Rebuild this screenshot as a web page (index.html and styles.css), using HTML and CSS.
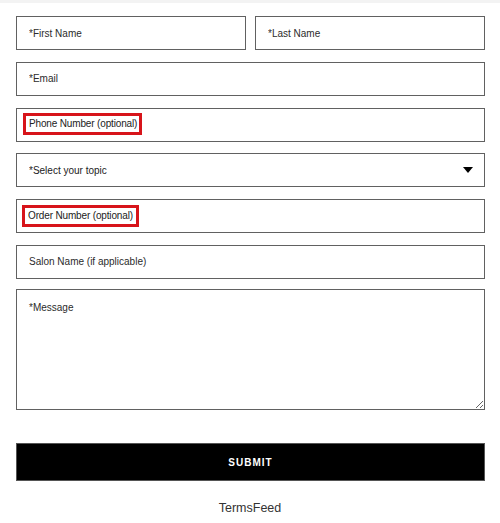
FILE: index.html
```html
<!DOCTYPE html>
<html lang="en">
<head>
    <meta charset="UTF-8">
    <meta name="viewport" content="width=device-width, initial-scale=1.0">
    <title>Contact Us</title>
    <link rel="stylesheet" href="styles.css">
</head>
<body>
    <div class="top-strip"></div>
    <form id="contactForm" class="contact-form">
        <div class="row">
            <input type="text" name="first_name" placeholder="*First Name" required>
            <input type="text" name="last_name" placeholder="*Last Name" required>
        </div>

        <input type="email" name="email" placeholder="*Email" required>

        <div class="field">
            <input type="tel" name="phone" aria-label="Phone Number (optional)">
            <span class="highlight phone-mark">Phone Number (optional)</span>
        </div>

        <div class="field">
            <select name="topic" required>
                <option value="">*Select your topic</option>
                <option value="order">Order</option>
                <option value="product">Product</option>
                <option value="other">Other</option>
            </select>
            <svg class="caret" width="10" height="6" viewBox="0 0 10 6"><path d="M0 0 H10 L5 6 Z" fill="#000"/></svg>
        </div>

        <div class="field">
            <input type="text" name="order_number" aria-label="Order Number (optional)">
            <span class="highlight order-mark">Order Number (optional)</span>
        </div>

        <input type="text" name="salon" placeholder="Salon Name (if applicable)">

        <textarea name="message" placeholder="*Message" required></textarea>

        <button type="submit" class="submit-btn">Submit</button>
    </form>

    <p class="footer-link">TermsFeed</p>
</body>
</html>
```

FILE: styles.css
```css
body {
    margin: 0;
    padding: 0;
    font-family: 'Liberation Sans', Arial, sans-serif;
    color: #222222;
    background: #ffffff;
}

.top-strip {
    height: 3px;
    background: #f3f3f3;
}

.contact-form {
    display: flex;
    flex-direction: column;
    gap: 11.8px;
    padding: 13px 15px 0 16px;
}

.row {
    display: flex;
    gap: 9px;
}

.row input {
    flex: 1;
    min-width: 0;
}

input, select, textarea {
    box-sizing: border-box;
    width: 100%;
    height: 34px;
    margin: 0;
    padding: 0 12px;
    border: 1px solid #616161;
    border-radius: 0;
    font-family: 'Liberation Sans', Arial, sans-serif;
    font-size: 10px;
    color: #222222;
    background: #ffffff;
}

input::placeholder, textarea::placeholder {
    color: #2b2b2b;
    opacity: 1;
}

select {
    appearance: none;
    -webkit-appearance: none;
    outline: none;
}

.field {
    position: relative;
}

.caret {
    position: absolute;
    right: 12px;
    top: 14px;
    pointer-events: none;
}

.highlight {
    position: absolute;
    box-sizing: border-box;
    height: 22px;
    padding-left: 3px;
    border: 3px solid #d7141a;
    font-size: 10px;
    letter-spacing: -0.15px;
    line-height: 16px;
    white-space: nowrap;
    color: #222222;
    pointer-events: none;
}

.phone-mark {
    left: 7px;
    top: 5px;
    width: 119px;
}

.order-mark {
    left: 6px;
    top: 6px;
    width: 117px;
}

textarea {
    height: 121px;
    margin-top: -2px;
    padding: 12px;
    resize: vertical;
}

.submit-btn {
    height: 38px;
    margin-top: 21px;
    padding-top: 2px;
    background: #000000;
    border: 1px solid #555555;
    color: #ffffff;
    font-family: 'Liberation Sans', Arial, sans-serif;
    font-size: 10px;
    font-weight: bold;
    letter-spacing: 1px;
    text-transform: uppercase;
    cursor: pointer;
}

.footer-link {
    margin: 19px 0 0;
    text-align: center;
    font-size: 12.5px;
    line-height: 16px;
    color: #333333;
}
```
